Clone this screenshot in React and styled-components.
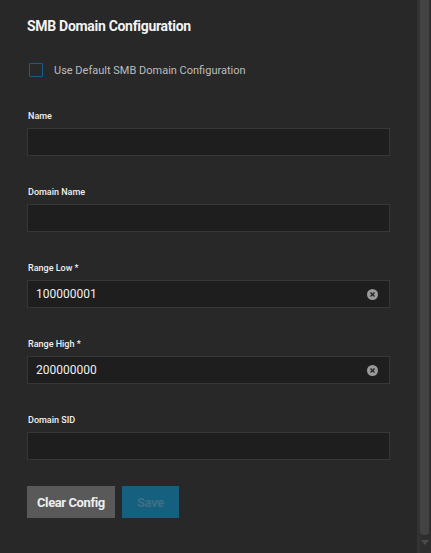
import React from "react";
import styled, { createGlobalStyle } from "styled-components";

const GlobalStyle = createGlobalStyle`
    html, body {
        margin: 0;
        padding: 0;
        background: #282828;
    }
    body {
        font-family: Roboto, "Noto Sans", sans-serif;
    }
`;

const fields = [
    { label: "Name", required: false, value: "" },
    { label: "Domain Name", required: false, value: "" },
    { label: "Range Low", required: true, value: "100000001" },
    { label: "Range High", required: true, value: "200000000" },
    { label: "Domain SID", required: false, value: "" },
];

function ClearIcon() {
    return (
        <svg width="11" height="11" viewBox="0 0 12 12">
            <circle cx="6" cy="6" r="6" fill="#9a9a9a" />
            <path d="M3.8 3.8 L8.2 8.2 M8.2 3.8 L3.8 8.2" stroke="#2a2a2a" strokeWidth="1.6" />
        </svg>
    );
}

function App() {
    return (
        <Page>
            <GlobalStyle />
            <Panel>
                <Title>SMB Domain Configuration</Title>
                <CheckRow>
                    <CheckBox />
                    <CheckLabel>Use Default SMB Domain Configuration</CheckLabel>
                </CheckRow>
                <Form>
                    {fields.map((f) => (
                        <Field key={f.label}>
                            <Label>
                                {f.label}
                                {f.required && <Required> *</Required>}
                            </Label>
                            <InputBox>
                                <Value>{f.value}</Value>
                                {f.value && <ClearIcon />}
                            </InputBox>
                        </Field>
                    ))}
                </Form>
                <Buttons>
                    <Button>Clear Config</Button>
                    <Button $primary>Save</Button>
                </Buttons>
            </Panel>
            <ScrollTrack>
                <ScrollThumb />
                <ScrollArrow />
            </ScrollTrack>
        </Page>
    );
}

export default App;

const Page = styled.div`
    width: 431px;
    height: 553px;
    display: flex;
    overflow: hidden;
    background: #282828;
`;

const Panel = styled.div`
    flex: 1;
    padding: 16px 0 0 27px;
    box-sizing: border-box;
`;

const Title = styled.h2`
    margin: 0;
    font-size: 14px;
    font-weight: 700;
    color: #f2f2f2;
    letter-spacing: -0.3px;
    line-height: 20px;
`;

const CheckRow = styled.div`
    display: flex;
    align-items: center;
    margin-top: 27px;
    padding-left: 2px;
`;

const CheckBox = styled.div`
    width: 12px;
    height: 12px;
    border: 1.5px solid #1b5d80;
    border-radius: 1px;
`;

const CheckLabel = styled.span`
    margin-left: 11px;
    font-size: 11px;
    color: #bdbdbd;
`;

const Form = styled.div`
    display: flex;
    flex-direction: column;
    gap: 30px;
    margin-top: 33px;
    width: 363px;
`;

const Field = styled.div`
    display: flex;
    flex-direction: column;
`;

const Label = styled.div`
    font-size: 9px;
    font-weight: 500;
    color: #f0f0f0;
    line-height: 12px;
    margin-bottom: 6px;
    padding-left: 1px;
`;

const Required = styled.span`
    color: #f0f0f0;
`;

const InputBox = styled.div`
    height: 28px;
    box-sizing: border-box;
    background: #1e1e1e;
    border: 1px solid #373737;
    display: flex;
    align-items: center;
    justify-content: space-between;
    padding: 0 11px 0 8px;
`;

const Value = styled.span`
    font-size: 12px;
    color: #f0f0f0;
`;

const Buttons = styled.div`
    display: flex;
    gap: 7px;
    margin-top: 26px;
`;

const Button = styled.button`
    height: 32px;
    border: none;
    padding: 0 10px;
    min-width: 57px;
    font-family: Roboto, sans-serif;
    font-size: 13px;
    font-weight: 700;
    letter-spacing: -0.4px;
    background: ${(p) => (p.$primary ? "#15607f" : "#595959")};
    color: ${(p) => (p.$primary ? "#3d6f86" : "#eeeeee")};
`;

const ScrollTrack = styled.div`
    width: 14px;
    display: flex;
    flex-direction: column;
    align-items: flex-end;
    background: #2e2e2e;
    border-left: 3px solid #333333;
    box-sizing: border-box;
`;

const ScrollThumb = styled.div`
    width: 9px;
    flex: 1;
    margin-right: 2px;
    background: #434343;
    border-radius: 0 0 4px 4px;
    margin-bottom: 5px;
`;

const ScrollArrow = styled.div`
    width: 0;
    height: 0;
    margin: 0 2px 8px 0;
    border-left: 4px solid transparent;
    border-right: 4px solid transparent;
    border-top: 5px solid #4a4a4a;
`;
